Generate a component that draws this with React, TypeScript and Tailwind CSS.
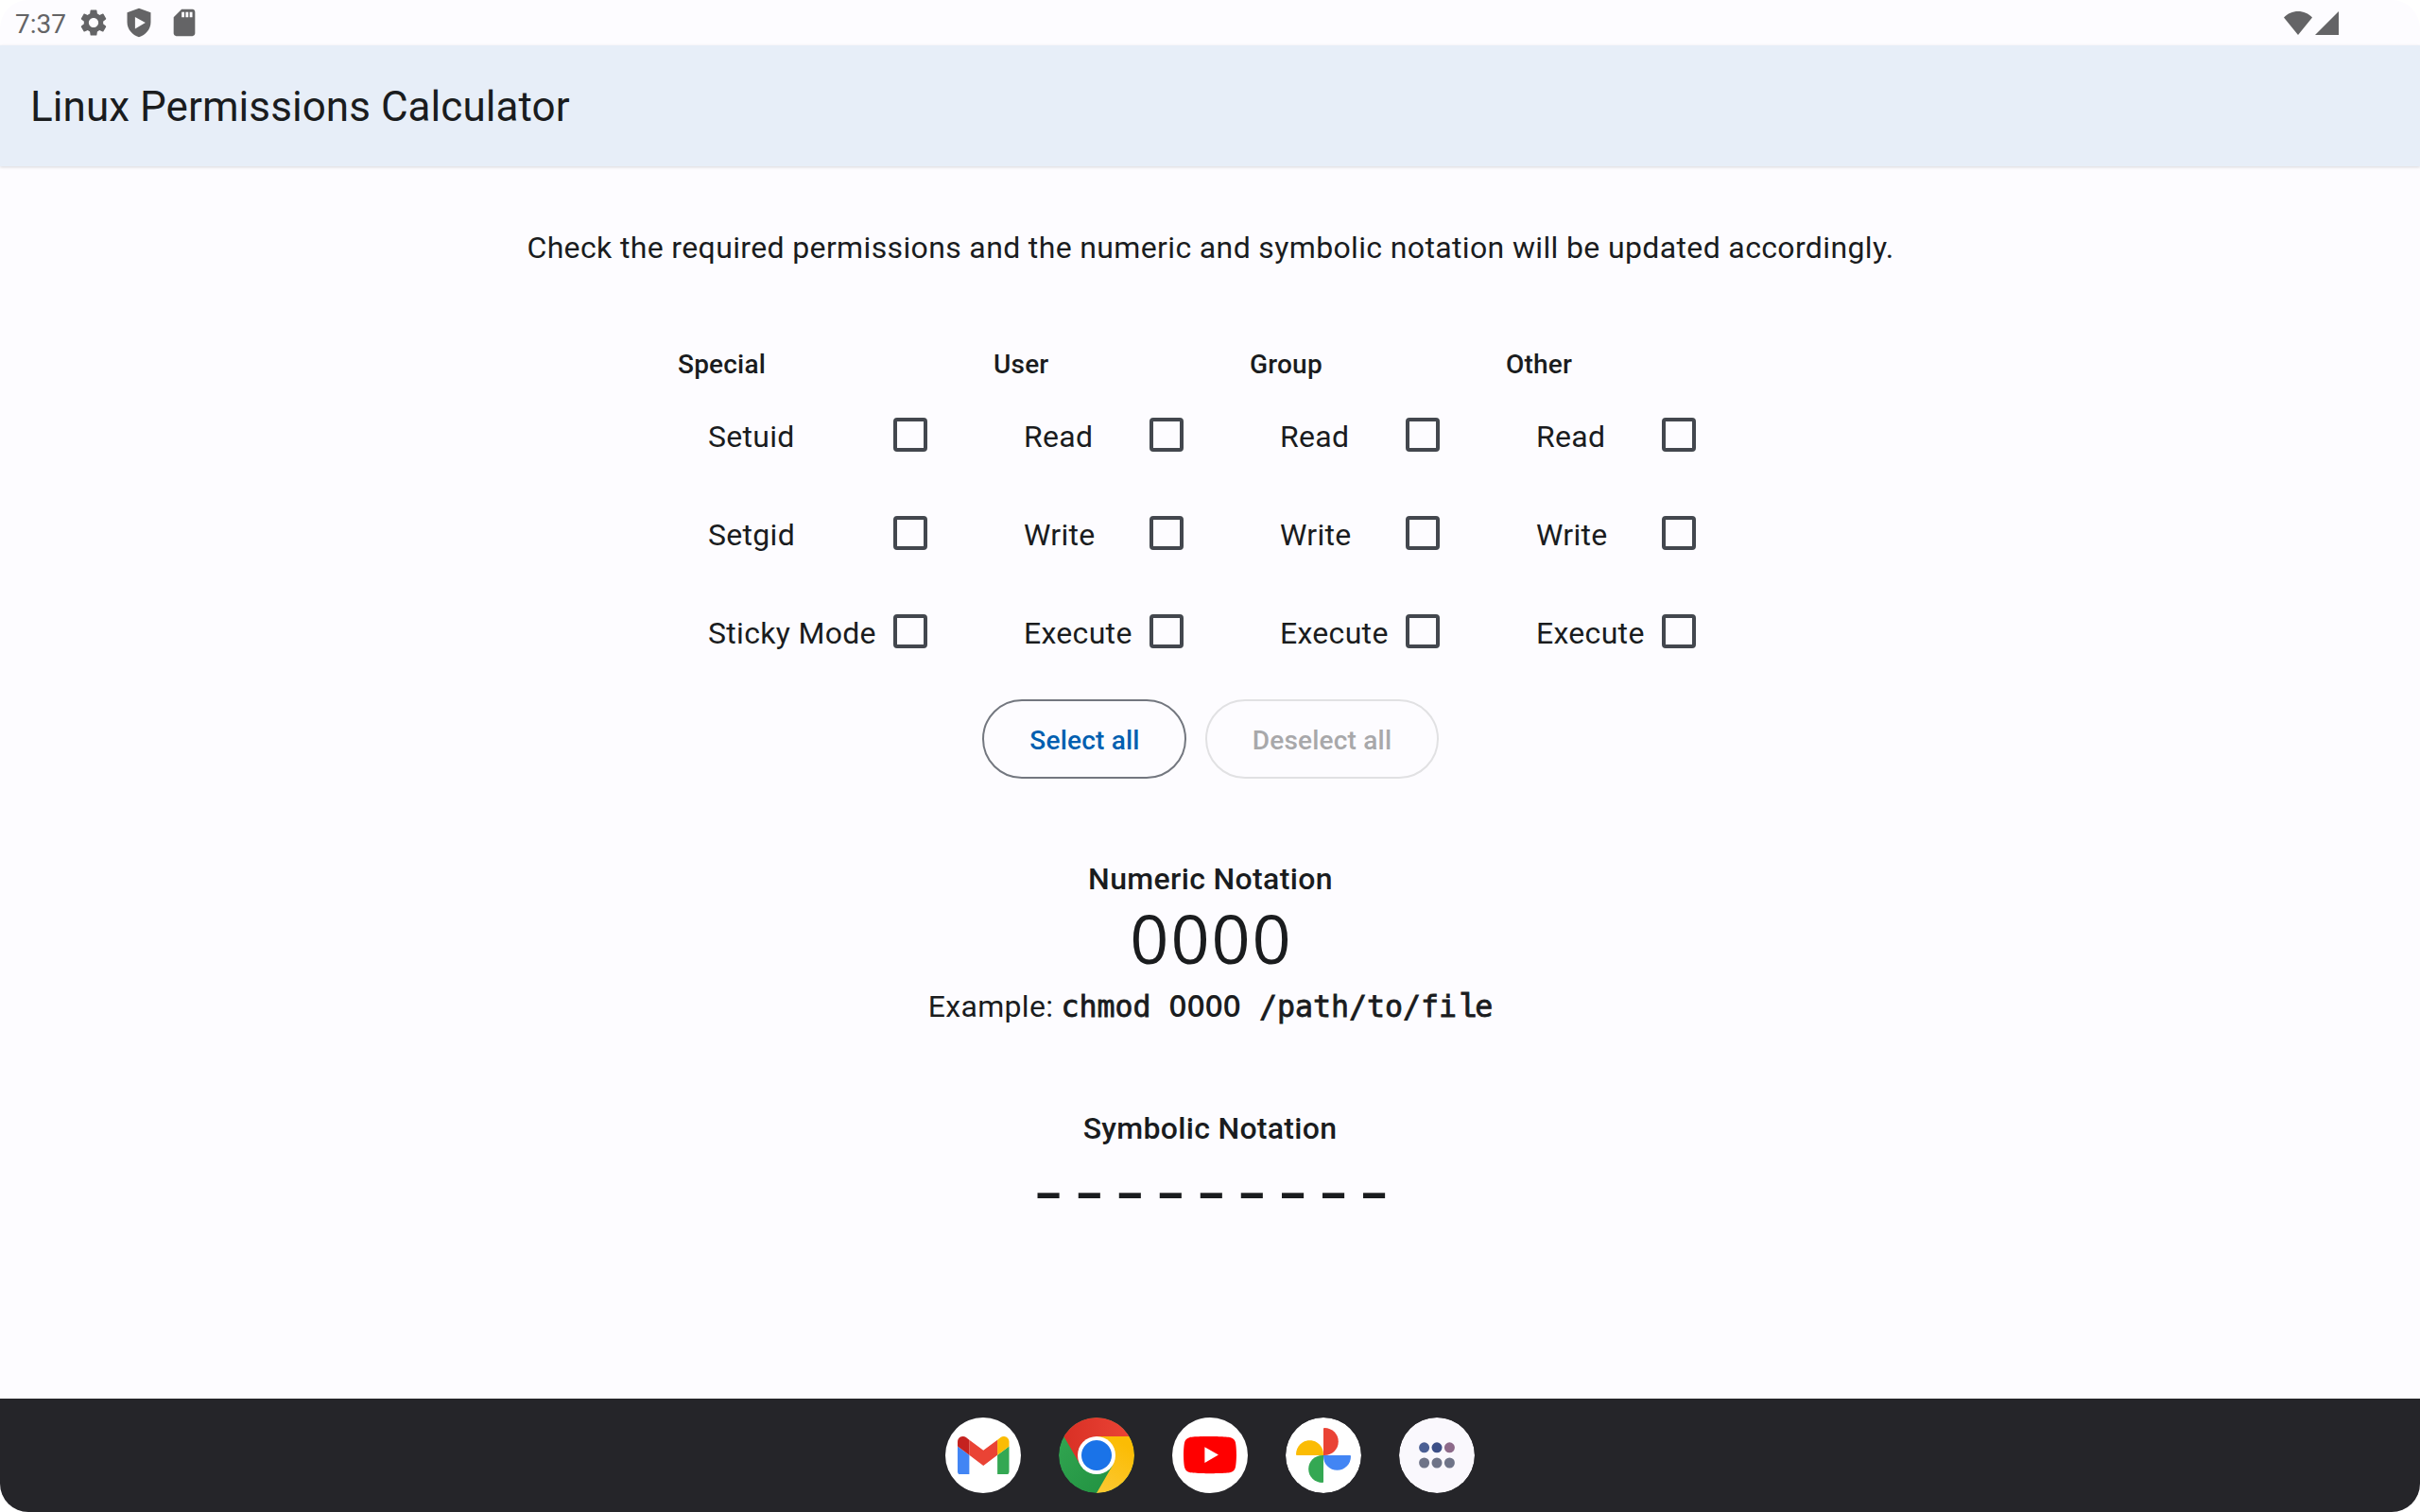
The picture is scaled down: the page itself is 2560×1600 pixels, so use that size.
import { useState } from "react";

const COLUMNS = [
  { title: "Special", items: ["Setuid", "Setgid", "Sticky Mode"], width: "w-[334px]", label: "w-[197px]" },
  { title: "User", items: ["Read", "Write", "Execute"], width: "w-[271px]", label: "w-[134px]" },
  { title: "Group", items: ["Read", "Write", "Execute"], width: "w-[271px]", label: "w-[134px]" },
  { title: "Other", items: ["Read", "Write", "Execute"], width: "w-[271px]", label: "w-[134px]" },
];

function StatusBar() {
  return (
    <div className="flex h-12 shrink-0 items-center justify-between pl-4 pr-[86px] text-[#646466]">
      <div className="flex items-center">
        <span className="w-[66px] pt-[4px] text-[28px] leading-[44px]">7:37</span>
        <svg className="size-[34px]" viewBox="0 0 24 24" fill="currentColor">
          <path d="M19.14 12.94c.04-.3.06-.61.06-.94 0-.32-.02-.64-.07-.94l2.03-1.58a.49.49 0 0 0 .12-.61l-1.92-3.32a.488.488 0 0 0-.59-.22l-2.39.96c-.5-.38-1.03-.7-1.62-.94l-.36-2.54a.484.484 0 0 0-.48-.41h-3.84c-.24 0-.43.17-.47.41l-.36 2.54c-.59.24-1.13.57-1.62.94l-2.39-.96c-.22-.08-.47 0-.59.22L2.74 8.87c-.12.21-.08.47.12.61l2.03 1.58c-.05.3-.09.63-.09.94s.02.64.07.94l-2.03 1.58a.49.49 0 0 0-.12.61l1.92 3.32c.12.22.37.29.59.22l2.39-.96c.5.38 1.03.7 1.62.94l.36 2.54c.05.24.24.41.48.41h3.84c.24 0 .44-.17.47-.41l.36-2.54c.59-.24 1.13-.56 1.62-.94l2.39.96c.22.08.47 0 .59-.22l1.92-3.32c.12-.22.07-.47-.12-.61l-2.01-1.58zM12 15.6c-1.98 0-3.6-1.62-3.6-3.6s1.62-3.6 3.6-3.6 3.6 1.62 3.6 3.6-1.62 3.6-3.6 3.6z" />
        </svg>
        <svg className="ml-[14px] size-[34px]" viewBox="0 0 24 24" fill="currentColor" fillRule="evenodd">
          <path d="M12 1.2 3.2 4.4v7.2c0 5.2 3.8 9.6 8.8 11.2 5-1.6 8.8-6 8.8-11.2V4.4zM9.1 7.7v8.8L16.8 12z" />
        </svg>
        <svg className="ml-[14px] size-[34px]" viewBox="0 0 24 24" fill="currentColor">
          <path d="M18 2h-8L4.02 8 4 20c0 1.1.9 2 2 2h12c1.1 0 2-.9 2-2V4c0-1.1-.9-2-2-2zm-6 6h-2V4h2v4zm3 0h-2V4h2v4zm3 0h-2V4h2v4z" />
        </svg>
      </div>
      <div className="flex items-center gap-[3px]">
        <svg className="h-[25px] w-[30px]" viewBox="0 0 30 25" fill="currentColor">
          <path d="M15 25 0 6.600C4 2.300 9.200 0 15 0s11 2.300 15 6.600z" />
        </svg>
        <svg className="h-[25px] w-[25px]" viewBox="0 0 25 25" fill="currentColor">
          <path d="M0 25H25V0z" />
        </svg>
      </div>
    </div>
  );
}

function Numerals({ value }: { value: string }) {
  return <span className="font-['Open_Sans'] text-[33px] font-semibold leading-[40px] tracking-[0.2px] [-webkit-text-stroke:0]">{value}</span>;
}

function Dock() {
  const tile = "size-20 shrink-0 rounded-full";
  return (
    <div className="flex h-[120px] shrink-0 items-center justify-center gap-10 bg-[#252529]">
      <div className={`${tile} flex items-center justify-center bg-white pl-[1px]`}>
        <svg className="w-[54.5px]" viewBox="52 42 88 66">
          <path fill="#4285f4" d="M58 108h14V74L52 59v43c0 3.320 2.690 6 6 6" />
          <path fill="#34a853" d="M120 108h14c3.320 0 6-2.690 6-6V59l-20 15" />
          <path fill="#fbbc04" d="M120 48v26l20-15v-8c0-7.420-8.470-11.650-14.400-7.200" />
          <path fill="#ea4335" d="M72 74V48l24 18 24-18v26L96 92" />
          <path fill="#c5221f" d="M52 51v8l20 15V48l-5.600-4.200c-5.940-4.450-14.400-.22-14.400 7.200" />
        </svg>
      </div>
      <svg className={tile} viewBox="0 0 80 80">
        <defs>
          <linearGradient id="cr" x1="0" x2="1"><stop stopColor="#d93025" /><stop offset="1" stopColor="#ea4335" /></linearGradient>
          <linearGradient id="cy" x1="0" x2=".4" y1="1" y2="0"><stop stopColor="#fcc934" /><stop offset="1" stopColor="#fbbc04" /></linearGradient>
          <linearGradient id="cg" x1="1" x2="0" y1="1" y2="0"><stop stopColor="#1e8e3e" /><stop offset="1" stopColor="#34a853" /></linearGradient>
        </defs>
        <circle cx="40" cy="40" r="40" fill="url(#cg)" />
        <path fill="url(#cr)" d="M5.360 20A40 40 0 0 1 74.640 20H40L22.700 50z" />
        <path fill="url(#cy)" d="M40 20H74.640A40 40 0 0 1 40 80L57.320 50z" />
        <circle cx="40" cy="40" r="20" fill="#fff" />
        <circle cx="40" cy="40" r="16" fill="#1a73e8" />
      </svg>
      <div className={`${tile} flex items-center justify-center bg-white`}>
        <svg className="w-14" viewBox="0 0 28.570 20">
          <path fill="#f00" d="M27.973 3.123A3.578 3.578 0 0 0 25.447.597C23.220 0 14.285 0 14.285 0S5.350 0 3.123.597A3.578 3.578 0 0 0 .597 3.123C0 5.350 0 10 0 10s0 4.650.597 6.877a3.578 3.578 0 0 0 2.526 2.526C5.350 20 14.285 20 14.285 20s8.935 0 11.162-.597a3.578 3.578 0 0 0 2.526-2.526C28.570 14.650 28.570 10 28.570 10s-.002-4.650-.597-6.877z" />
          <path fill="#fff" d="M11.425 14.285 18.848 10l-7.423-4.285z" />
        </svg>
      </div>
      <svg className={tile} viewBox="0 0 80 80">
        <circle cx="40" cy="40" r="40" fill="#fff" />
        {[["#ea4335", 0], ["#4285f4", 90], ["#34a853", 180], ["#fbbc04", 270]].map(([fill, angle]) => (
          <path key={angle} fill={String(fill)} transform={`rotate(${angle} 40 40)`} d="M40 12q0-1 1-1C49.500 11 55.800 17.500 55.800 25.500S49.500 40 41 40H40z" />
        ))}
      </svg>
      <svg className={tile} viewBox="0 0 80 80">
        <circle cx="40" cy="40" r="40" fill="#faf8fd" />
        <circle cx="26.600" cy="31.800" r="5.500" fill="#4b5f94" />
        <circle cx="40" cy="31.800" r="5.500" fill="#3c4f87" />
        <circle cx="53.400" cy="31.800" r="5.500" fill="#8d6a8a" />
        <circle cx="26.600" cy="48" r="5.500" fill="#6f7488" />
        <circle cx="40" cy="48" r="5.500" fill="#6f7488" />
        <circle cx="53.400" cy="48" r="5.500" fill="#6f7488" />
      </svg>
    </div>
  );
}

export default function App() {
  const [checked, setChecked] = useState<boolean[]>(Array(12).fill(false));
  const toggle = (i: number) => setChecked((prev) => prev.map((v, n) => (n === i ? !v : v)));
  const numeric = [0, 3, 6, 9]
    .map((s) => (checked[s] ? 4 : 0) + (checked[s + 1] ? 2 : 0) + (checked[s + 2] ? 1 : 0))
    .join("");
  const symbolic = [3, 4, 5, 6, 7, 8, 9, 10, 11].map((i) => (checked[i] ? "rwx"[i % 3] : "-")).join("");

  return (
    <div className="h-[1600px] w-[2560px] bg-white">
      <div className="flex h-full flex-col overflow-hidden rounded-[30px] bg-[#fdfcff] font-['Roboto',sans-serif] text-[#1a1c1e]">
        <StatusBar />
        <header className="flex h-32 shrink-0 items-center bg-[#e7eef8] px-8 shadow-[0_1px_3px_rgba(0,0,0,0.15)]">
          <h1 className="pt-[2px] text-[44px] leading-[56px] tracking-[0.06px]">Linux Permissions Calculator</h1>
        </header>
        <main className="flex grow flex-col items-center pt-[62px]">
          <p className="pl-px text-[32px] leading-[48px] tracking-[0.36px]">
            Check the required permissions and the numeric and symbolic notation will be updated accordingly.
          </p>
          <div className="mt-[78px] flex w-[1128px]">
            {COLUMNS.map((col, c) => (
              <section key={col.title} className={`${col.width} shrink-0`}>
                <h2 className="pl-px pt-[2px] text-[28px] font-medium leading-[40px] tracking-[0.2px]">{col.title}</h2>
                <div className="mt-[2px] pl-8">
                  {col.items.map((item, r) => (
                    <label key={item} className="flex h-[104px] items-center">
                      <span className={`${col.label} shrink-0 whitespace-nowrap pl-px pt-[3px] text-[32px] leading-[48px] tracking-[0.3px]`}>{item}</span>
                      <input
                        type="checkbox"
                        checked={checked[c * 3 + r]}
                        onChange={() => toggle(c * 3 + r)}
                        className="size-9 shrink-0 appearance-none rounded-[4px] border-4 border-[#43474e] checked:border-[#0061a4] checked:bg-[#0061a4]"
                      />
                    </label>
                  ))}
                </div>
              </section>
            ))}
          </div>
          <div className="mt-5 flex gap-5">
            <button onClick={() => setChecked(Array(12).fill(true))} className="h-[84px] w-[216px] rounded-full border-2 border-[#73777f] pl-[2px] pt-[3px] text-[28px] font-medium tracking-[0.2px] text-[#005fb0]">
              Select all
            </button>
            <button onClick={() => setChecked(Array(12).fill(false))} className="h-[84px] w-[247px] rounded-full border-2 border-[#e1e1e3] pl-px pt-[3px] text-[28px] font-medium tracking-[0.2px] text-[#a8a8aa]">
              Deselect all
            </button>
          </div>
          <h2 className="mt-[82px] pl-px text-[32px] font-medium leading-[48px] tracking-[0.35px]">Numeric Notation</h2>
          <div className="pl-[3px] font-['Open_Sans'] text-[72px] leading-[76px] tracking-[1.9px]">{numeric}</div>
          <p className="mt-[11px] whitespace-pre pl-px text-[32px] leading-[48px]">
            <span className="tracking-[0.3px]">Example: </span>
            <span className="font-['DejaVu_Sans_Mono'] text-[31.6px] leading-[40px] [-webkit-text-stroke:0.8px_#1a1c1e]">
              {"chmod "}
              <Numerals value={numeric} />
              {" /path/to/fi"}
              <span className="font-['Liberation_Mono'] text-[35px] leading-[40px] tracking-[-2px]">l</span>e
            </span>
          </p>
          <h2 className="mt-[81px] text-[32px] font-medium leading-[48px] tracking-[0.3px]">Symbolic Notation</h2>
          <div className="scale-x-[1.27] pr-[7px] font-['DejaVu_Sans_Mono'] text-[71.5px] leading-[85px] tracking-[-9.15px]">{symbolic}</div>
        </main>
        <Dock />
      </div>
    </div>
  );
}
